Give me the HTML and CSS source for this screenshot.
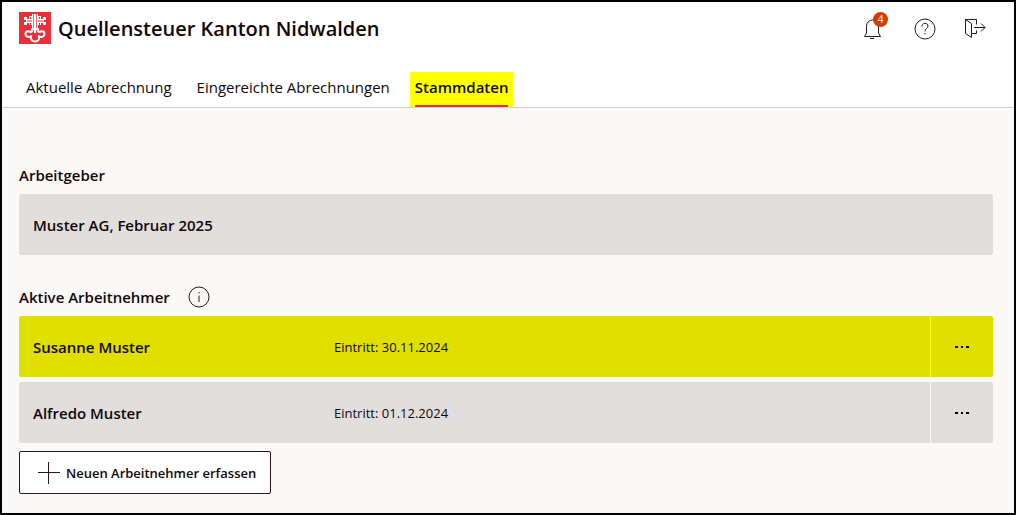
FILE: index.html
```html
<!DOCTYPE html>
<html lang="de">
<head>
    <meta charset="utf-8">
    <title>Quellensteuer Kanton Nidwalden</title>
    <link rel="stylesheet" href="styles.css">
</head>
<body>

    <header class="header">
        <div class="topbar">
            <svg class="logo" viewBox="0 0 32 32" aria-hidden="true">
                <rect width="32" height="32" fill="#e8303a"/>
                <!-- Bart -->
                <path fill="#fff" d="M5 5h3v2h2V4h4v9h-4v-2H8v2H5v-3h2V8H5zM27 5h-3v2h-2V4h-4v9h4v-2h2v2h3v-3h-2V8h2z"/>
                <path stroke="#e8303a" d="M8 9h5M19 9h5M11.500 5v2M20.500 5v2M11.500 11v2M20.500 11v2"/>
                <!-- Schaft -->
                <path fill="#fff" d="M13 2h6v15h-6z"/>
                <path stroke="#e8303a" stroke-width=".7" fill="none" d="M14.500 2v14M17.500 2v14"/>
                <!-- Griff -->
                <path fill="none" stroke="#fff" stroke-width="2" d="M12 17.500h8M13.500 19c-1 1.500-2 1-3 .5c-2.500-1-4 .5-4 2.500c0 2.500 2.500 3.500 5.500 2.500c-.5 3 1 5 4 5s4.500-2 4-5c3 1 5.500 0 5.500-2.500c0-2-1.500-3.500-4-2.500c-1 .5-2 1-3-.5M16 18v3"/>
            </svg>
            <h1 class="title">Quellensteuer Kanton Nidwalden</h1>
            <div class="tools">
                <button class="tool" type="button" aria-label="Benachrichtigungen">
                    <svg class="icon" width="22" height="22" viewBox="0 0 22 22">
                        <path d="M3.500 15V8a6 6 0 0 1 12 0v7l2 3.500h-16zM7 20.500h4"/>
                    </svg>
                    <span class="badge">4</span>
                </button>
                <button class="tool" type="button" aria-label="Hilfe">
                    <svg class="icon" width="22" height="22" viewBox="0 0 22 22">
                        <circle cx="11" cy="11" r="10"/>
                        <path d="M8 8.500c0-4.500 6-4 6-.5c0 2.500-3 2.500-3 5.500M11 15v1.500"/>
                    </svg>
                </button>
                <button class="tool" type="button" aria-label="Abmelden">
                    <svg class="icon" width="22" height="22" viewBox="0 0 22 22">
                        <path d="M.5 1.500l6 4v14l-6-4zM.5 1.500h11v5M6.500 15.500h5v-3M9 9.500h11M16 5.500l4 4l-4 4"/>
                    </svg>
                </button>
            </div>
        </div>
        <nav class="tabs">
            <a class="tab" href="#">Aktuelle Abrechnung</a>
            <a class="tab" href="#">Eingereichte Abrechnungen</a>
            <a class="tab active" href="#" aria-current="page">Stammdaten</a>
        </nav>
    </header>

    <main class="content">
        <section class="section">
            <h2 class="heading">Arbeitgeber</h2>
            <div class="row">
                <div class="name">Muster AG, Februar 2025</div>
            </div>
        </section>

        <section class="section">
            <h2 class="heading">
                Aktive Arbeitnehmer
                <button class="info" type="button" aria-label="Info">
                    <svg class="icon" width="22" height="22" viewBox="0 0 22 22">
                        <circle cx="11" cy="11" r="10"/>
                        <path d="M11 9.500v6.500M11 6v1.500"/>
                    </svg>
                </button>
            </h2>
            <div class="row marked">
                <div class="name">Susanne Muster</div>
                <div class="entry">Eintritt: 30.11.2024</div>
                <button class="more" type="button" aria-label="Mehr">
                    <svg width="16" height="4" viewBox="0 0 16 4"><path d="M1 1h3v2H1zM7 1h2v2H7zM12 1h3v2h-3z"/></svg>
                </button>
            </div>
            <div class="row">
                <div class="name">Alfredo Muster</div>
                <div class="entry">Eintritt: 01.12.2024</div>
                <button class="more" type="button" aria-label="Mehr">
                    <svg width="16" height="4" viewBox="0 0 16 4"><path d="M1 1h3v2H1zM7 1h2v2H7zM12 1h3v2h-3z"/></svg>
                </button>
            </div>
            <button class="add" type="button">
                <svg class="icon" width="22" height="22" viewBox="0 0 22 22">
                    <path d="M0 10.500h22M10.500 0v22"/>
                </svg>
                Neuen Arbeitnehmer erfassen
            </button>
        </section>
    </main>

</body>
</html>
```

FILE: styles.css
```css
*{
    box-sizing: border-box;
}
body{
    margin: 0;
    min-height: 100vh;
    border: solid 2px #000;
    background-color: #faf9f8;
    color: #120608;
    font: 15px/24px "Open Sans", "Noto Sans", sans-serif;
}
button{
    margin: 0;
    padding: 0;
    border: 0;
    background: none;
    color: inherit;
    font: inherit;
    cursor: pointer;
}
svg{
    display: block;
}
.icon{
    fill: none;
    stroke: #2b1719;
}
.header{
    background-color: #fff;
    border-bottom: solid 1px #d0cfce;
}
.topbar{
    display: flex;
    align-items: flex-start;
    padding: 10px 27px 0 17px;
}
.logo{
    width: 32px;
    height: 32px;
}
.title{
    margin: 0 0 0 7px;
    font-size: 20px;
    line-height: 34px;
    font-weight: 600;
}
.tools{
    display: flex;
    gap: 29px;
    margin-left: auto;
    padding-top: 6px;
}
.tool{
    position: relative;
}
.badge{
    position: absolute;
    top: -6px;
    right: -3px;
    width: 15px;
    height: 15px;
    border-radius: 50%;
    background-color: #d83b01;
    color: #fff;
    font-size: 10px;
    line-height: 15px;
}
.tabs{
    display: flex;
    gap: 15px;
    padding: 26px 19px 0;
}
.tab{
    padding: 3px 5px 0;
    color: inherit;
    text-decoration: none;
}
.tab::after{
    content: "";
    display: block;
    height: 2px;
    margin-top: 6px;
}
.tab.active{
    background-color: #ff0;
    font-weight: 600;
}
.tab.active::after{
    background-color: #e8303a;
}
.content{
    padding: 55px 21px 19px 17px;
}
.section{
    margin-bottom: 30px;
}
.section:last-child{
    margin-bottom: 0;
}
.heading{
    display: flex;
    align-items: center;
    gap: 18px;
    margin: 0 0 7px;
    font-size: 15px;
    font-weight: 600;
}
.row{
    display: flex;
    align-items: center;
    height: 61px;
    margin-bottom: 5px;
    padding-left: 14px;
    border-radius: 2px;
    background-color: #e1dfdd;
}
.row.marked{
    background-color: #e1df00;
}
.name{
    min-width: 301px;
    font-weight: 600;
}
.entry{
    font-size: 13px;
}
.more{
    display: flex;
    align-items: center;
    justify-content: center;
    align-self: stretch;
    width: 63px;
    margin-left: auto;
    border-left: solid 1px #faf9f8;
}
.marked .more{
    border-left-color: #ff0;
}
.add{
    display: flex;
    align-items: center;
    gap: 6px;
    height: 43px;
    margin-top: 8px;
    padding: 0 14px 0 18px;
    border: solid 1px #2b1719;
    border-radius: 2px;
    background-color: #fff;
    font-size: 13px;
    font-weight: 600;
}
```
